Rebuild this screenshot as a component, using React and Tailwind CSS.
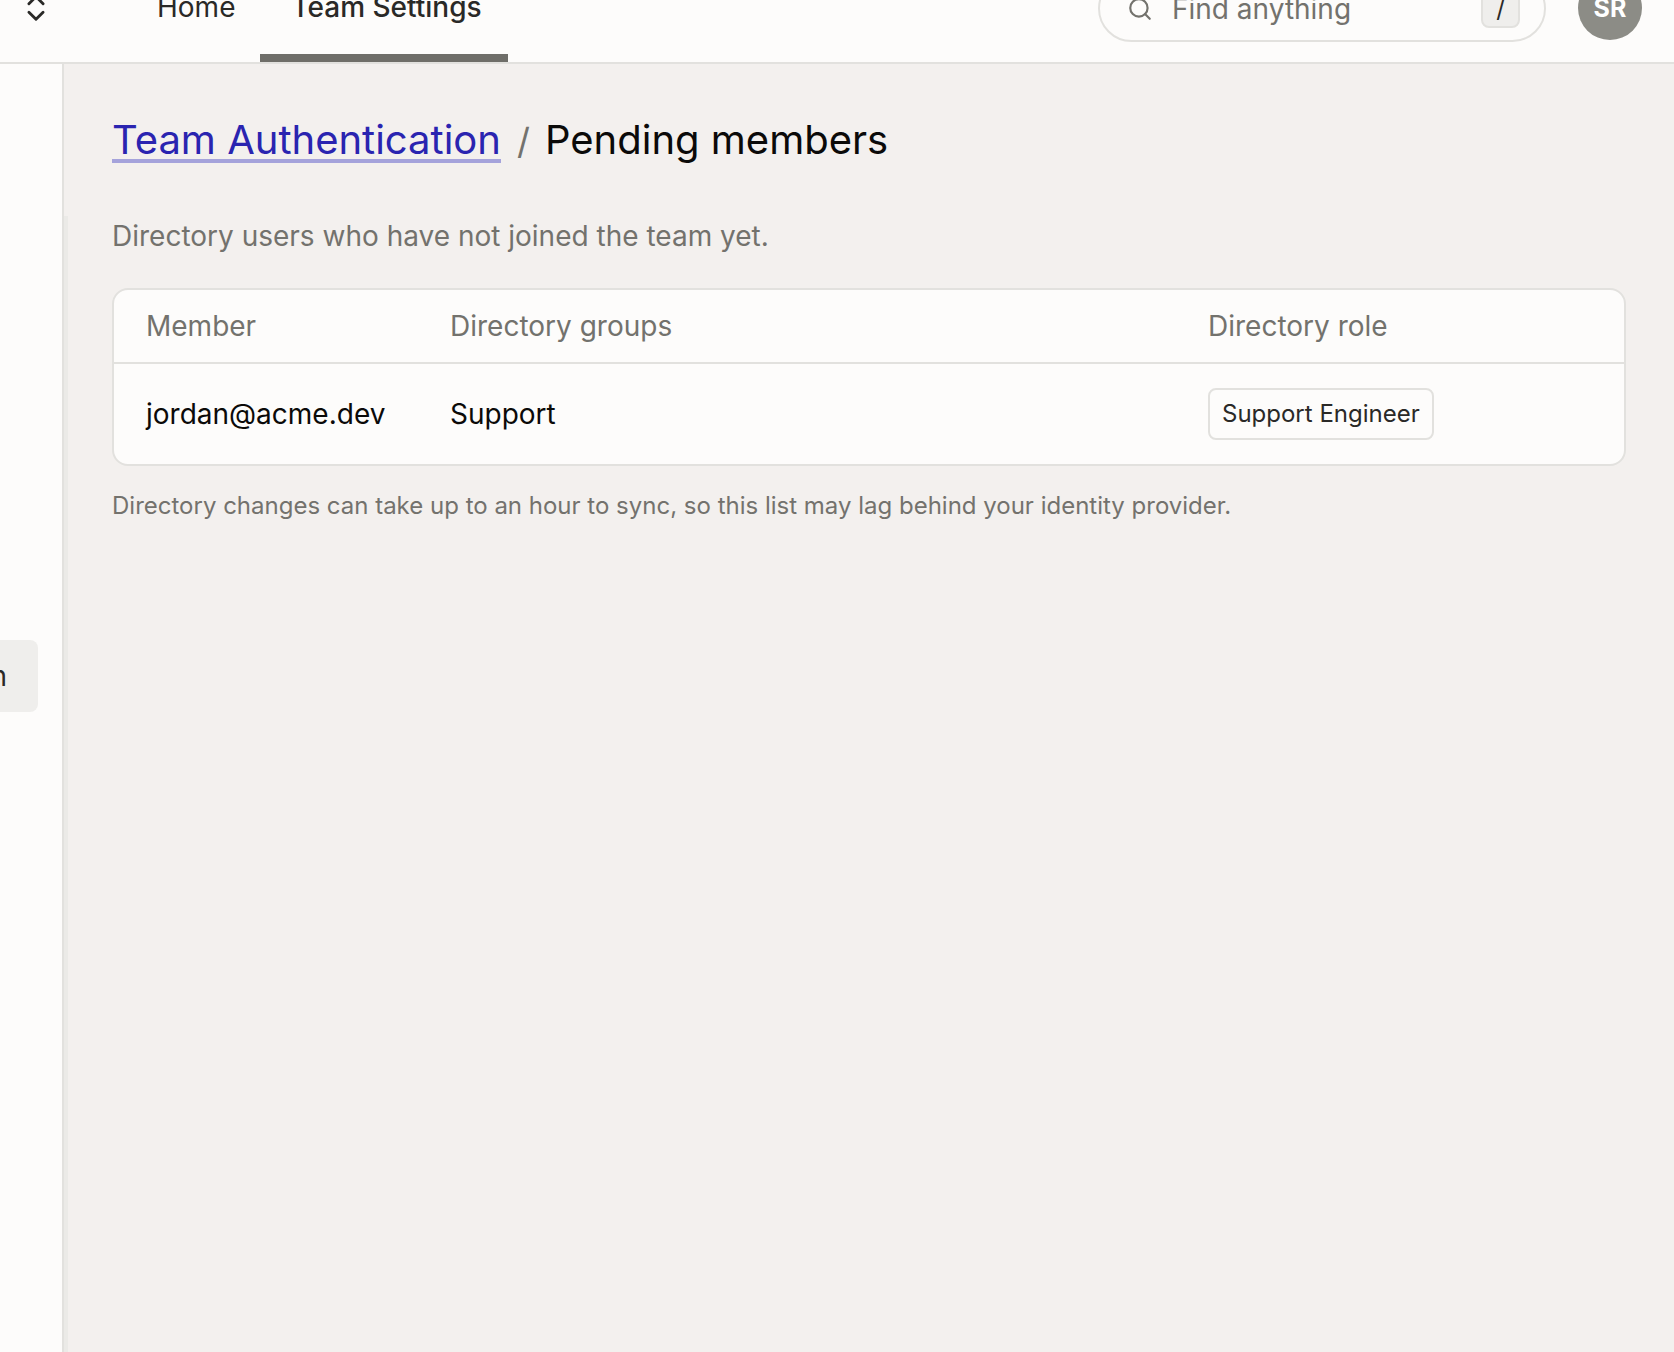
import React from 'react';
import { ChevronsUpDown, Search } from 'lucide-react';

export default function App() {
  return (
    <div className="h-screen overflow-hidden flex flex-col bg-[#f3f0ee] text-[#1f1e1c] font-['Inter',sans-serif]">

      <header className="h-[110px] -mt-[46px] flex-shrink-0 flex items-stretch bg-[#fdfcfb] border-b-2 border-[#e2e1de]">
        <div className="w-[72px] flex-shrink-0 flex items-center justify-center">
          <ChevronsUpDown size={34} strokeWidth={2} className="text-[#2a2927]" />
        </div>
        <nav className="flex items-stretch ml-[85px] text-[28px]">
          <a className="flex items-center text-[#2a2927] pr-[25px] pb-[2px]">Home</a>
          <a className="flex items-center pl-[31px] pr-[26px] border-b-[8px] border-[#6f6e69] pt-[6px] text-[#2a2927] font-medium">Team Settings</a>
        </nav>
        <div className="ml-auto flex items-center pr-[32px]">
          <div className="w-[448px] h-[67px] mt-[1px] rounded-full border-2 border-[#e2e1de] flex items-center pl-[27px] pr-[24px] text-[#73726d]">
            <Search size={26} strokeWidth={2} />
            <span className="ml-[19px] text-[28px]">Find anything</span>
            <kbd className="ml-auto w-[39px] h-[38px] rounded-lg border-2 border-[#e2e1de] bg-[#efeeec] flex items-center justify-center text-[24px] font-['Inter',sans-serif] text-[#2a2927]">/</kbd>
          </div>
          <div className="ml-[32px] w-[64px] h-[64px] pt-[2px] rounded-full bg-[#8c8c86] flex items-center justify-center text-white font-bold text-[25px]">SR</div>
        </div>
      </header>

      <div className="flex-1 flex min-h-0">
        {/* Sidebar, scrolled sideways so only the end of the active item shows */}
        <aside className="w-[64px] flex-shrink-0 bg-[#fdfcfb] border-r-2 border-[#e2e1de] pt-[576px] overflow-hidden">
          <div className="w-[38px] h-[72px] rounded-r-lg bg-[#efeeec] flex items-center justify-end pr-[31px] text-[28px] text-[#2a2927] whitespace-nowrap overflow-hidden">
            Authentication
          </div>
        </aside>

        <main className="relative flex-1 min-w-0 pl-[48px] pr-[48px] pt-[48px]">
          <div className="absolute left-0 top-[152px] bottom-0 w-[4px] bg-[#ebeae7]" />

          <h1 className="flex items-baseline text-[40px] leading-[56px]">
            <a className="text-[#2a24b0] border-b-[4px] border-[#a5a3db] leading-[38px]">Team Authentication</a>
            <span className="ml-[16px] mr-[15px] text-[36px] text-[#73726d]">/</span>
            <span className="text-[#0b0a09]">Pending members</span>
          </h1>

          <p className="mt-[47px] text-[28px] leading-[40px] text-[#73726d]">Directory users who have not joined the team yet.</p>

          <div className="mt-[32px] rounded-2xl border-2 border-[#e2e1de] bg-[#fdfcfb] overflow-hidden">
            <div className="h-[74px] flex items-center border-b-2 border-[#e2e1de] text-[28px] text-[#73726d]">
              <div className="w-[336px] pl-[32px] flex-shrink-0">Member</div>
              <div className="w-[758px] flex-shrink-0">Directory groups</div>
              <div>Directory role</div>
            </div>
            <div className="h-[100px] flex items-center text-[28px] text-[#0b0a09]">
              <div className="w-[336px] pl-[32px] flex-shrink-0">jordan@acme.dev</div>
              <div className="w-[758px] flex-shrink-0">Support</div>
              <div className="h-[52px] px-[12px] flex items-center rounded-lg border-2 border-[#e2e1de] text-[24px] text-[#2a2927]">Support Engineer</div>
            </div>
          </div>

          <p className="mt-[23px] text-[24px] leading-[34px] text-[#73726d]">Directory changes can take up to an hour to sync, so this list may lag behind your identity provider.</p>
        </main>
      </div>
    </div>
  );
}
